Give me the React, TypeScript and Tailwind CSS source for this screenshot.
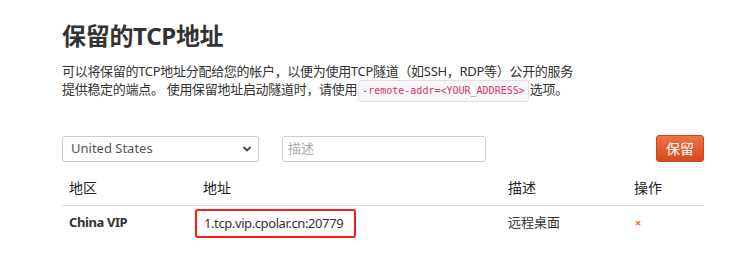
import React from "react";

const font = { fontFamily: '"Noto Sans", "Noto Sans CJK SC", sans-serif' };

export default function App() {
  return (
    <div className="w-[734px] h-[256px] bg-white overflow-hidden text-[#333]" style={font}>
      <div className="ml-[62px] w-[642px] pt-[21px]">
        <h1 className="text-[24px] leading-[30px] font-bold text-[#333] tracking-[-0.3px]">保留的TCP地址</h1>
        <p className="mt-[11px] text-[13px] leading-[18px] text-[#333] tracking-[-0.3px]">
          可以将保留的TCP地址分配给您的帐户，以便为使用TCP隧道（如SSH，RDP等）公开的服务
          <br />
          提供稳定的端点。 使用保留地址启动隧道时，请使用
          <code
            className="inline-block mx-[1px] px-[3px] h-[22px] leading-[20px] align-middle text-[10px] text-[#d6336c] bg-[#f7f7f9] border border-[#e1e1e8] rounded-[3px] tracking-normal"
            style={{ fontFamily: '"DejaVu Sans Mono", "Liberation Mono", monospace' }}
          >
            -remote-addr=&lt;YOUR_ADDRESS&gt;
          </code>
          选项。
        </p>

        <div className="mt-[33px] flex items-center h-[27px]">
          <div className="relative w-[197px] h-[26px] border border-[#ccc] rounded-[3px] flex items-center pl-[8px] text-[13px] text-[#555]">
            United States
            <svg className="absolute right-[6px] top-[8px]" width="10" height="8" viewBox="0 0 10 8">
              <path d="M1.5 2 L5 5.5 L8.5 2" fill="none" stroke="#444" strokeWidth="1.8" />
            </svg>
          </div>
          <div className="ml-[23px] w-[204px] h-[26px] border border-[#ccc] rounded-[3px] flex items-center pl-[5px] text-[13px] text-[#aaa]">
            描述
          </div>
          <button className="ml-auto w-[48px] h-[27px] rounded-[3px] text-white text-[14px] bg-gradient-to-b from-[#ee7245] to-[#d44a1c] border border-[#c8461c]">
            保留
          </button>
        </div>

        <div className="mt-[16px]">
          <div className="grid grid-cols-[134px_304px_126px_1fr] border-b border-[#ddd] text-[14px] leading-[20px] pb-[7px] text-[#222]">
            <div className="pl-[7px]">地区</div>
            <div className="pl-[7px]">地址</div>
            <div className="pl-[8px]">描述</div>
            <div className="pl-[8px]">操作</div>
          </div>
          <div className="grid grid-cols-[134px_304px_126px_1fr] items-center h-[34px] text-[13px]">
            <div className="pl-[7px] font-bold text-[#333] tracking-[-0.4px]">China VIP</div>
            <div>
              <span className="inline-block -ml-[1px] w-[161px] h-[29px] leading-[25px] pl-[7px] border-2 border-[#ff1a1a] rounded-[3px] text-[#333] tracking-[-0.4px]">
                1.tcp.vip.cpolar.cn:20779
              </span>
            </div>
            <div className="pl-[8px] text-[#333]">远程桌面</div>
            <div className="pl-[9px] text-[#e8663a] text-[11px] font-bold">×</div>
          </div>
        </div>
      </div>
    </div>
  );
}
